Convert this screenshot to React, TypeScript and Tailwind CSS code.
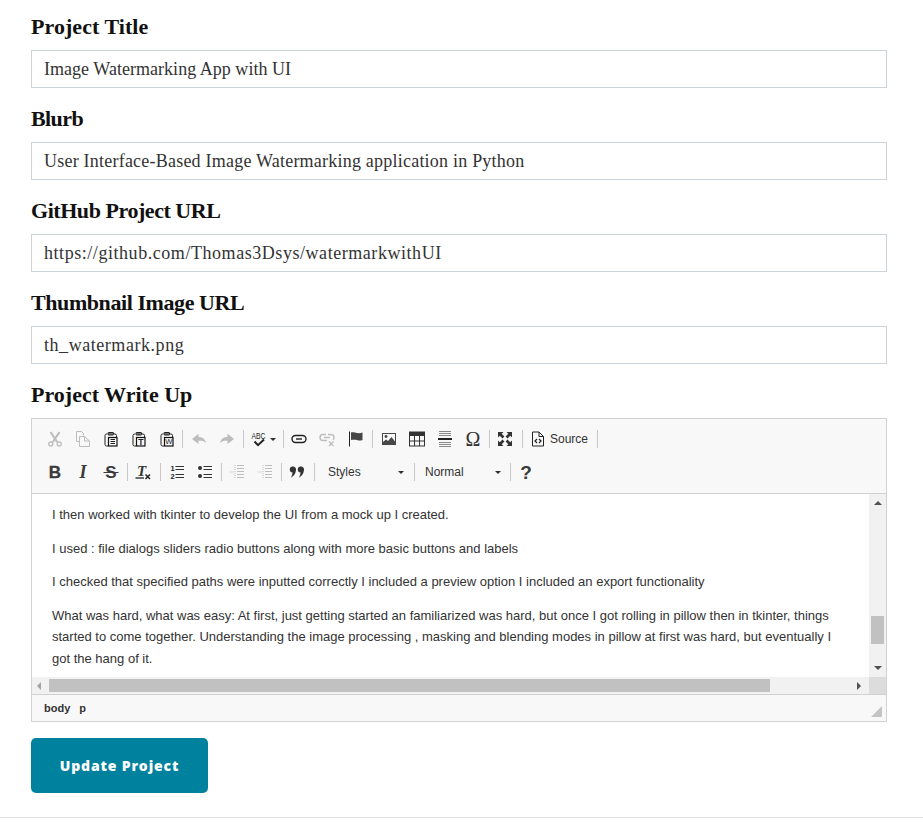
import React from "react";

const D = "#474747";
const G = "#bdbdbd";

function Ico({ children, w = 16, h = 16 }: { children: React.ReactNode; w?: number; h?: number }) {
  return (
    <svg width={w} height={h} viewBox={`0 0 ${w} ${h}`} fill="none" className="block overflow-visible">
      {children}
    </svg>
  );
}

const Scissors = () => (
  <Ico>
    <path d="M3.5 1 L10.2 11 M12.5 1 L5.8 11" stroke={G} strokeWidth="2.2" />
    <circle cx="3.8" cy="13" r="2" stroke={G} strokeWidth="1.3" />
    <circle cx="12.2" cy="13" r="2" stroke={G} strokeWidth="1.3" />
  </Ico>
);
const Copy = () => (
  <Ico>
    <path d="M1.5 0.5 H6.5 L8.5 2.5 V4.5 M1.5 0.5 V10.5 H4.5" stroke={G} />
    <path d="M4.5 5.5 H9.5 L14.5 10 V15.5 H4.5 Z M9.5 5.5 V10 H14.5" stroke={G} />
  </Ico>
);
const Board = ({ children }: { children?: React.ReactNode }) => (
  <Ico>
    <path d="M4 3 H3.5 Q2 3 2 4.5 V13.5 Q2 15 3.5 15 H5 M11 3 H12 Q13.5 3 13.5 4.5 V6" stroke="#222" />
    <rect x="5" y="1.5" width="5.5" height="2.5" fill="#777" stroke="#222" rx="0.5" />
    <rect x="5.5" y="6.5" width="8.5" height="8.5" fill="#f8f8f8" stroke="#111" strokeWidth="1.2" />
    {children}
  </Ico>
);
const Paste = () => (
  <Board>
    <path d="M7.5 8.5 H12 M7.5 10.5 H12 M7.5 12.5 H12" stroke="#222" />
  </Board>
);
const PasteT = () => (
  <Board>
    <text x="9.8" y="13.5" textAnchor="middle" fontSize="8.5" fontWeight="700" fontFamily="Liberation Sans" fill="#222">T</text>
  </Board>
);
const PasteW = () => (
  <Board>
    <text x="9.8" y="13.2" textAnchor="middle" fontSize="7.5" fontFamily="Liberation Sans" fill="#222">W</text>
  </Board>
);
const Undo = () => (
  <Ico>
    <path d="M1 8 L7.5 2.8 V6 C11 6 14 7.5 15 12 C13 10 11 9.6 7.5 9.8 V13 Z" fill={G} />
  </Ico>
);
const Redo = () => (
  <Ico>
    <path d="M15 8 L8.5 2.8 V6 C5 6 2 7.5 1 12 C3 10 5 9.6 8.5 9.8 V13 Z" fill={G} />
  </Ico>
);
const Spell = () => (
  <Ico>
    <text x="7.5" y="7.5" textAnchor="middle" fontSize="9" textLength="14" lengthAdjust="spacingAndGlyphs" fontFamily="Liberation Sans" fill="#222">ABC</text>
    <path d="M3.5 10.5 L7 14.2 L13 8.5" stroke="#222" strokeWidth="2" />
  </Ico>
);
const Link = () => (
  <Ico>
    <rect x="1" y="4.5" width="14" height="7" rx="3.5" stroke="#222" strokeWidth="1.4" />
    <path d="M5 8 H11" stroke="#222" strokeWidth="1.4" />
  </Ico>
);
const Unlink = () => (
  <Ico>
    <path d="M7 3.5 H4 Q1 3.5 1 6.5 Q1 9.5 4 9.5 H8 M9 3.5 H12 Q15 3.5 15 6.5 Q15 8 14 8.8 M5 6.5 H11" stroke={G} strokeWidth="1.4" />
    <path d="M10 10.5 L14.5 15 M14.5 10.5 L10 15" stroke={G} strokeWidth="1.4" />
  </Ico>
);
const Flag = () => (
  <Ico>
    <path d="M1.5 0.5 V15.5" stroke="#222" />
    <path d="M3 1.5 C6 1 7 2 9 2 C11 2.4 13 2 14.5 1.5 V9 C12 10 10.5 9.5 9 9 C7 8.5 5 8.5 3 9 Z" fill={D} />
  </Ico>
);
const Image = () => (
  <Ico>
    <rect x="1" y="2" width="14" height="12" fill={D} />
    <rect x="2" y="3" width="12" height="8" fill="#f8f8f8" />
    <circle cx="5" cy="5.5" r="1.4" fill={D} />
    <path d="M2 11 L5 8.5 L7 10 L10.5 6 L14 10.5 V13 H2 Z" fill={D} />
  </Ico>
);
const TableI = () => (
  <Ico>
    <rect x="0.5" y="1" width="15" height="14" fill="#f8f8f8" stroke="#333" />
    <rect x="0.5" y="1" width="15" height="4" fill="#333" />
    <path d="M5.5 5 V15 M10.5 5 V15 M1 10 H15" stroke="#333" />
  </Ico>
);
const Hr = () => (
  <Ico>
    <path d="M2 0.5 H14 M2 2.5 H14 M2 4.5 H14 M2 11.5 H14 M2 13.5 H14 M2 15.5 H14" stroke="#8a8a8a" />
    <rect x="1" y="7" width="14" height="2" fill="#222" />
  </Ico>
);
const Omega = () => (
  <Ico>
    <text x="8" y="14.5" textAnchor="middle" fontSize="20" fontFamily="Liberation Serif" fill="#333">Ω</text>
  </Ico>
);
const Maximize = () => (
  <Ico>
    <path d="M1 1 H6.5 L4.7 2.8 L7.4 5.5 L5.5 7.4 L2.8 4.7 L1 6.5 Z" fill="#333" />
    <path d="M15 1 H9.5 L11.3 2.8 L8.6 5.5 L10.5 7.4 L13.2 4.7 L15 6.5 Z" fill="#333" />
    <path d="M1 15 H6.5 L4.7 13.2 L7.4 10.5 L5.5 8.6 L2.8 11.3 L1 9.5 Z" fill="#333" />
    <path d="M15 15 H9.5 L11.3 13.2 L8.6 10.5 L10.5 8.6 L13.2 11.3 L15 9.5 Z" fill="#333" />
  </Ico>
);
const SourceI = () => (
  <Ico>
    <path d="M2.5 1 H9 L13.5 5.5 V15 H2.5 Z M9 1 V5.5 H13.5" stroke="#222" />
    <path d="M7 8 L5 10 L7 12 M9 8 L11 10 L9 12" stroke="#222" strokeWidth="1.2" />
  </Ico>
);
const Bold = () => (
  <Ico>
    <text x="8" y="14" textAnchor="middle" fontSize="17" fontFamily="Liberation Sans" fontWeight="700" fill="#3a3a3a" stroke="#3a3a3a" strokeWidth="0.3">B</text>
  </Ico>
);
const Italic = () => (
  <Ico>
    <text x="8" y="14" textAnchor="middle" fontSize="18" fontFamily="Liberation Serif" fontStyle="italic" fontWeight="700" fill="#3a3a3a">I</text>
  </Ico>
);
const Strike = () => (
  <Ico>
    <text x="8" y="14" textAnchor="middle" fontSize="17" fontFamily="Liberation Sans" fontWeight="700" fill="#3a3a3a">S</text>
    <path d="M0.5 8.5 H15.5" stroke="#3a3a3a" />
  </Ico>
);
const RemoveFormat = () => (
  <Ico>
    <text x="6.5" y="11.5" textAnchor="middle" fontSize="15" fontFamily="Liberation Serif" fontStyle="italic" fontWeight="700" fill="#333">T</text>
    <path d="M0.5 14 H9" stroke="#333" strokeWidth="1.4" />
    <path d="M10.5 10.5 L15 15 M15 10.5 L10.5 15" stroke="#222" strokeWidth="1.5" />
  </Ico>
);
const Ol = () => (
  <Ico>
    <text x="3.5" y="7" textAnchor="middle" fontSize="7.5" fontWeight="700" fontFamily="Liberation Sans" fill="#222">1</text>
    <text x="3.5" y="14.5" textAnchor="middle" fontSize="7.5" fontWeight="700" fontFamily="Liberation Sans" fill="#222">2</text>
    <path d="M6.5 2.5 H15 M6.5 5.5 H15 M6.5 10.5 H15 M6.5 13.5 H15" stroke="#333" strokeWidth="1.2" />
  </Ico>
);
const Ul = () => (
  <Ico>
    <circle cx="3" cy="4" r="2" fill="#333" />
    <circle cx="3" cy="12" r="2" fill="#333" />
    <path d="M6.5 2.5 H15 M6.5 5.5 H15 M6.5 10.5 H15 M6.5 13.5 H15" stroke="#333" strokeWidth="1.2" />
  </Ico>
);
const Outdent = () => (
  <Ico>
    <path d="M8 1.5 H15 M8 4.5 H15 M8 7.5 H15 M8 10.5 H15 M8 13.5 H15" stroke={G} />
    <path d="M6 1 V15 M0.5 8 H5" stroke={G} strokeDasharray="1 1" />
  </Ico>
);
const Indent = () => (
  <Ico>
    <path d="M8 1.5 H15 M8 4.5 H15 M8 7.5 H15 M8 10.5 H15 M8 13.5 H15" stroke={G} />
    <path d="M6 1 V15 M0.5 8 H5" stroke={G} strokeDasharray="1 1" />
  </Ico>
);
const Quote = () => (
  <Ico>
    <path d="M4 2.5 A3 3 0 0 1 7 6 C6.7 9.5 5 12 1.8 13.5 C3 11.5 3.4 10.5 3.5 8.5 A3 3 0 0 1 4 2.5 Z" fill="#333" />
    <path d="M12 2.5 A3 3 0 0 1 15 6 C14.7 9.5 13 12 9.8 13.5 C11 11.5 11.4 10.5 11.5 8.5 A3 3 0 0 1 12 2.5 Z" fill="#333" />
  </Ico>
);
const Help = () => (
  <span className="font-['Liberation_Sans',sans-serif] text-[19px] font-bold leading-none text-[#3a3a3a]">?</span>
);

function Btn({ children, w = "w-7" }: { children: React.ReactNode; w?: string }) {
  return <div className={`${w} h-7 flex items-center justify-center shrink-0`}>{children}</div>;
}

function Sep({ className = "w-[4px]" }: { className?: string }) {
  return (
    <div className={`${className} h-7 flex items-center justify-center shrink-0`}>
      <div className="w-px h-[18px] bg-[#c8c8c8]" />
    </div>
  );
}

const Caret = () => <div className="w-0 h-0 border-x-[3px] border-x-transparent border-t-[3px] border-t-[#2f2f2f]" />;

function Combo({ label, className }: { label: string; className: string }) {
  return (
    <div className={`${className} h-7 flex items-center justify-between shrink-0 text-[12px] text-[#333]`}>
      <span>{label}</span>
      <Caret />
    </div>
  );
}

function Field({ label, value, labelCls, inputCls }: { label: string; value: string; labelCls: string; inputCls: string }) {
  return (
    <div className="mb-4">
      <label className={`flex items-center h-[30px] pb-[2px] mb-2 font-['Liberation_Serif',serif] font-bold text-[22px] text-[#111111] ${labelCls}`}>
        {label}
      </label>
      <input
        readOnly
        value={value}
        className={`block w-full h-[38px] border border-[#ccd3d8] bg-white px-3 pt-[1px] font-['Liberation_Serif',serif] text-[18px] text-[#333333] outline-none ${inputCls}`}
      />
    </div>
  );
}

const Tri = ({ className }: { className: string }) => <div className={`w-0 h-0 ${className}`} />;

export default function App() {
  return (
    <div className="w-[923px] h-[822px] bg-white overflow-hidden">
      <div className="pt-3 pl-[31px] pr-9">
        <Field label="Project Title" value="Image Watermarking App with UI" labelCls="tracking-[0.05px]" inputCls="tracking-[0.03px]" />
        <Field label="Blurb" value="User Interface-Based Image Watermarking application in Python" labelCls="tracking-[-0.6px]" inputCls="tracking-[0.22px]" />
        <Field label="GitHub Project URL" value="https://github.com/Thomas3Dsys/watermarkwithUI" labelCls="tracking-[-0.45px]" inputCls="tracking-[0.55px]" />
        <Field label="Thumbnail Image URL" value="th_watermark.png" labelCls="tracking-[-0.42px]" inputCls="tracking-[0.55px]" />
        <label className="flex items-center h-[30px] pb-[2px] mb-2 font-['Liberation_Serif',serif] font-bold text-[22px] text-[#111111]">
          Project Write Up
        </label>

        <div className="border border-[#d1d1d1] font-['Liberation_Sans',sans-serif]">
          <div className="bg-[#f8f8f8] border-b border-[#d1d1d1] pt-[6px] pb-[7px] pl-[9px]">
            <div className="flex mb-[5px]">
              <Btn><Scissors /></Btn>
              <Btn><Copy /></Btn>
              <Btn><Paste /></Btn>
              <Btn><PasteT /></Btn>
              <Btn><PasteW /></Btn>
              <Sep className="w-[4px] pr-[2px]" />
              <Btn><Undo /></Btn>
              <Btn><Redo /></Btn>
              <Sep />
              <div className="w-[36px] h-7 flex items-center gap-[3px] pl-[6px] shrink-0">
                <Spell />
                <Caret />
              </div>
              <Sep />
              <Btn><Link /></Btn>
              <Btn><Unlink /></Btn>
              <Btn w="w-7 pl-[2px]"><Flag /></Btn>
              <Sep className="w-[6px]" />
              <Btn><Image /></Btn>
              <Btn><TableI /></Btn>
              <Btn><Hr /></Btn>
              <Btn><Omega /></Btn>
              <Sep />
              <Btn><Maximize /></Btn>
              <Sep className="w-[6px]" />
              <div className="h-7 w-[70px] flex items-center gap-1 pl-[5px] text-[12px] text-[#333] shrink-0">
                <SourceI />
                <span>Source</span>
              </div>
              <Sep />
            </div>
            <div className="flex">
              <Btn><Bold /></Btn>
              <Btn><Italic /></Btn>
              <Btn><Strike /></Btn>
              <Sep />
              <Btn><RemoveFormat /></Btn>
              <Sep className="w-[6px]" />
              <Btn><Ol /></Btn>
              <Btn><Ul /></Btn>
              <Sep />
              <Btn><Outdent /></Btn>
              <Btn><Indent /></Btn>
              <Sep />
              <Btn><Quote /></Btn>
              <Sep className="w-[6px]" />
              <Combo label="Styles" className="w-[95px] pl-[11px] pr-[8px]" />
              <Sep />
              <Combo label="Normal" className="w-[92px] pl-[9px] pr-[7px]" />
              <Sep />
              <Btn><Help /></Btn>
            </div>
          </div>

          <div className="flex h-[183px] bg-white">
            <div className="flex-1 overflow-hidden pt-[10px] pl-5">
              <div className="w-[790px] text-[13px] leading-[21.6px] text-[#333333]">
                <p className="mb-3">I then worked with tkinter to develop the UI from a mock up I created.</p>
                <p className="mb-3">I used : file dialogs sliders radio buttons along with more basic buttons and labels</p>
                <p className="mb-3">I checked that specified paths were inputted correctly I included a preview option I included an export functionality</p>
                <p>
                  What was hard, what was easy: At first, just getting started an familiarized was hard, but once I got rolling in pillow then in tkinter, things started to come together. Understanding the image processing , masking and blending modes in pillow at first was hard, but eventually I got the hang of it.
                </p>
              </div>
            </div>
            <div className="w-[17px] bg-[#f1f1f1] flex flex-col items-center shrink-0">
              <Tri className="mt-[7px] border-x-4 border-x-transparent border-b-4 border-b-[#505050]" />
              <div className="mt-[111px] w-[13px] h-[28px] bg-[#c1c1c1]" />
              <Tri className="mt-[22px] border-x-4 border-x-transparent border-t-4 border-t-[#505050]" />
            </div>
          </div>

          <div className="flex h-[17px]">
            <div className="flex-1 bg-[#f1f1f1] flex items-center">
              <Tri className="ml-[5px] border-y-4 border-y-transparent border-r-4 border-r-[#a3a3a3]" />
              <div className="ml-2 w-[721px] h-[13px] bg-[#c1c1c1]" />
              <Tri className="ml-[87px] border-y-4 border-y-transparent border-l-4 border-l-[#505050]" />
            </div>
            <div className="w-[17px] bg-[#dcdcdc] shrink-0" />
          </div>

          <div className="h-[27px] border-t border-[#d1d1d1] bg-[#f8f8f8] flex items-center justify-between pl-3 pr-1">
            <div className="flex gap-[9px] text-[11px] font-bold text-[#333]">
              <span>body</span>
              <span>p</span>
            </div>
            <svg width="11" height="11" viewBox="0 0 11 11" className="block mt-[6px]">
              <path d="M11 0 V11 H0 Z" fill="#c4c4c4" />
            </svg>
          </div>
        </div>

        <button className="block mt-4 w-[177px] h-[55px] rounded-[5px] bg-[#00819e] font-['Open_Sans',sans-serif] font-extrabold text-[14px] tracking-[0.85px] text-white">
          Update Project
        </button>
      </div>
      <div className="mt-6 h-px bg-[#e0e0e0]" />
    </div>
  );
}
